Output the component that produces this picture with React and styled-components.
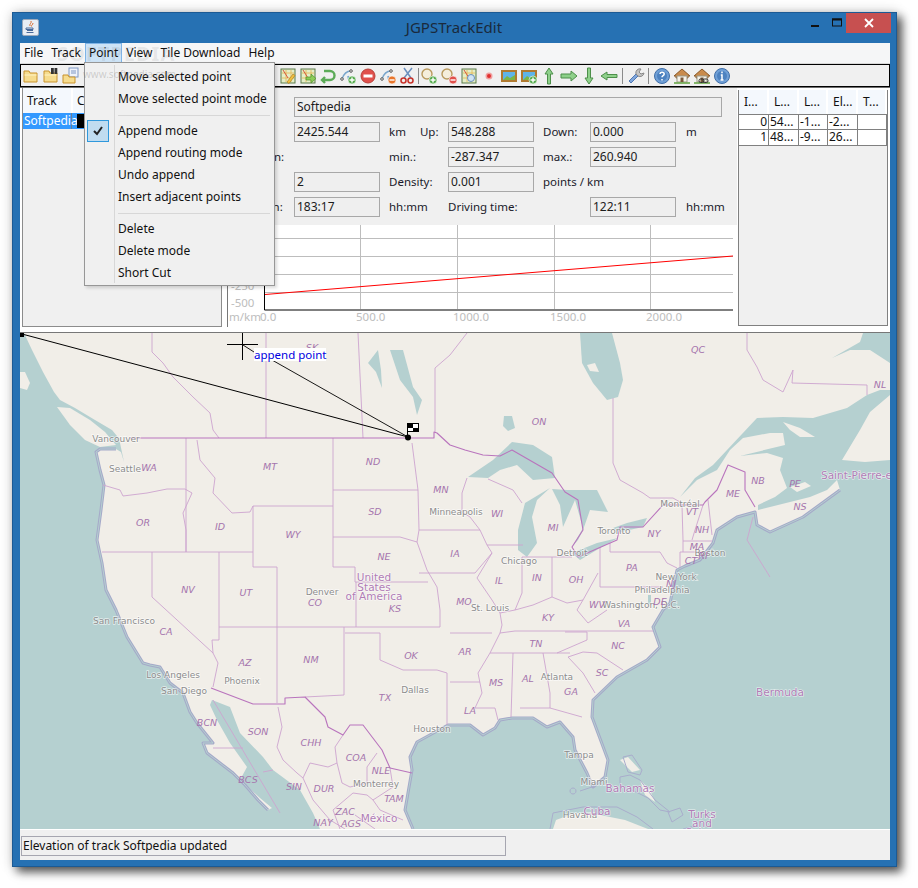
import React from "react";
import styled, { createGlobalStyle } from "styled-components";

const GlobalStyle = createGlobalStyle`
  html, body {
    margin: 0;
    padding: 0;
    background: #fff;
    font-family: "Noto Sans", "Liberation Sans", sans-serif;
    font-size: 12px;
    color: #111;
  }
`;

const Page = styled.div`
  width: 918px;
  height: 888px;
  padding: 12px 0 0 12px;
  box-sizing: border-box;
  overflow: hidden;
`;

const Window = styled.div`
  width: 885px;
  height: 855px;
  background: #2671b3;
  box-shadow: 5px 5px 9px rgba(0, 0, 0, 0.65), 0 0 12px rgba(0, 0, 0, 0.18);
  outline: 1px solid #1c5a94;
  outline-offset: -1px;
  display: flex;
  flex-direction: column;
`;

const TitleBar = styled.div`
  height: 31px;
  position: relative;
  display: flex;
  align-items: flex-start;
  justify-content: center;
  flex: none;
`;

const TitleIcon = styled.div`
  position: absolute;
  left: 10px;
  top: 7px;
  width: 15px;
  height: 15px;
  background: #e8edf4;
  border: 1px solid #9aa8bb;
  border-radius: 2px;
  display: flex;
  align-items: center;
  justify-content: center;
`;

const TitleText = styled.div`
  margin-top: 5px;
  margin-left: -1px;
  font-size: 15px;
  line-height: 20px;
  color: #1a2a3c;
`;

const WindowButtons = styled.div`
  position: absolute;
  right: 6px;
  top: 1px;
  display: flex;
  align-items: flex-start;
`;

const WinButton = styled.div`
  width: ${(p) => p.$w}px;
  height: 20px;
  background: ${(p) => (p.$close ? "#c75050" : "transparent")};
  display: flex;
  align-items: center;
  justify-content: center;
`;

const Client = styled.div`
  position: relative;
  margin: 0 7px 7px 8px;
  height: 817px;
  background: #f0f0f0;
  display: flex;
  flex-direction: column;
  overflow: hidden;
`;

const MenuBar = styled.div`
  height: 20px;
  flex: none;
  background: #f5f6f7;
  display: flex;
  align-items: stretch;
  padding-left: 0;
  border-bottom: 1px solid #d8d8d8;
`;

const MenuLabel = styled.div`
  padding: 0 ${(p) => p.$pad || 4}px;
  line-height: 19px;
  margin-right: ${(p) => p.$gap || 0}px;
  box-sizing: border-box;
  background: ${(p) => (p.$open ? "#cde3f6" : "transparent")};
  box-shadow: ${(p) => (p.$open ? "inset 0 0 0 1px #7fb4e6" : "none")};
  white-space: nowrap;
`;

const Toolbar = styled.div`
  height: 22px;
  flex: none;
  display: flex;
  align-items: center;
  border: 1px solid #000;
  background: #f0f0f0;
  border-bottom-width: 1px;
  box-shadow: 0 2px 0 #6e6e6e;
  box-sizing: border-box;
  height: 23px;
`;

const ToolSpacer = styled.div`
  width: ${(p) => p.$w}px;
  flex: none;
`;

const ToolCell = styled.div`
  width: 20px;
  height: 20px;
  flex: none;
  display: flex;
  align-items: center;
  justify-content: center;
`;

const ToolSep = styled.div`
  width: 1px;
  height: 16px;
  flex: none;
  background: #8a8a8a;
  margin: 0 ${(p) => p.$r || 0}px 0 ${(p) => p.$l || 0}px;
`;

const Panels = styled.div`
  height: 245px;
  flex: none;
  margin-top: 1px;
  display: flex;
  background: #fff;
  border-bottom: 1px solid #777;
  box-sizing: border-box;
`;

const TrackPanel = styled.div`
  width: 200px;
  margin-left: 2px;
  height: 239px;
  flex: none;
  box-sizing: border-box;
  background: #f0f0f0;
  border: 1px solid #8c8c8c;
  border-top: none;
`;

const TableHead = styled.div`
  display: grid;
  grid-template-columns: ${(p) => p.$cols};
  height: ${(p) => p.$h}px;
  background: #fff;
`;

const HeadCell = styled.div`
  background: #f4f8fd;
  margin-right: 2px;
  padding-left: ${(p) => p.$pad || 4}px;
  line-height: ${(p) => p.$h}px;
  white-space: nowrap;
  overflow: hidden;
`;

const TrackRow = styled.div`
  display: grid;
  grid-template-columns: 49px 1fr;
  height: 16px;
  background: #3399ff;
  color: #fff;
  line-height: 15px;
`;

const TrackName = styled.div`
  padding-left: 1px;
  border-right: 1px solid #6c7f95;
`;

const Swatch = styled.div`
  background: #000;
  width: 20px;
  height: 14px;
  margin: 1px 0 0 5px;
`;

const CenterPanel = styled.div`
  width: 510px;
  flex: none;
  margin-left: 5px;
  height: 239px;
  display: flex;
  flex-direction: column;
  border-left: 1px solid #777;
  box-sizing: border-box;
`;

const StatsForm = styled.div`
  height: 137px;
  flex: none;
  background: #f0f0f0;
  box-sizing: border-box;
  padding: 9px 0 0 4px;
  display: grid;
  grid-template-columns: 62px 86px 68px 86px 56px 86px 46px;
  grid-auto-rows: 20px;
  row-gap: 5px;
`;

const FormLabel = styled.div`
  grid-column: ${(p) => p.$col || "auto"};
  padding-left: ${(p) => p.$pad || 0}px;
  line-height: 20px;
  white-space: nowrap;
  font-size: 11.5px;
  color: #1a1a2a;
`;

const UnitWithLabel = styled(FormLabel)`
  display: flex;
  gap: 14px;
`;

const Field = styled.div`
  grid-column: ${(p) => p.$col || "auto"};
  box-sizing: border-box;
  border: 1px solid #a8a8a8;
  background: #efefef;
  padding-left: 2px;
  line-height: 18px;
  font-size: 12px;
  color: #1c1c1c;
`;

const ChartBox = styled.div`
  flex: 1;
  background: #fff;
  position: relative;
`;

const PointPanel = styled.div`
  width: 150px;
  flex: none;
  margin: 2px 0 0 1px;
  height: 236px;
  box-sizing: border-box;
  background: #f0f0f0;
  border: 1px solid #808080;
  border-top: none;
`;

const PointGrid = styled.div`
  display: grid;
  grid-template-columns: 30px 30px 29px 30px 29px;
`;

const PointCell = styled.div`
  height: 16px;
  box-sizing: border-box;
  background: #fff;
  border-right: 1px solid #808080;
  border-bottom: 1px solid #808080;
  border-top: ${(p) => (p.$first ? "1px solid #808080" : "none")};
  line-height: 14px;
  font-size: 12px;
  padding: 0 1px;
  text-align: ${(p) => (p.$right ? "right" : "left")};
  white-space: nowrap;
  overflow: hidden;
`;

const MapArea = styled.div`
  height: 496px;
  flex: none;
  position: relative;
  overflow: hidden;
  background: #b5d0d0;
`;

const MapSvg = styled.svg`
  display: block;
  width: 870px;
  height: 496px;
`;

const MapTip = styled.div`
  position: absolute;
  left: 234px;
  top: 15px;
  width: 72px;
  height: 13px;
  background: #fff;
  color: #0000e0;
  font-size: 11.5px;
  line-height: 13px;
  white-space: nowrap;
`;

const StatusBar = styled.div`
  flex: 1;
  padding: 6px 0 0 1px;
  background: #f0f0f0;
  border-top: 1px solid #fff;
  box-sizing: border-box;
`;

const StatusField = styled.div`
  width: 485px;
  height: 20px;
  box-sizing: border-box;
  border: 1px solid #a6a6b0;
  padding-left: 1px;
  line-height: 18px;
  color: #111;
`;

const PopupMenu = styled.div`
  position: absolute;
  left: 64px;
  top: 19px;
  width: 191px;
  height: 224px;
  box-sizing: border-box;
  background: #f0f0f0;
  border: 1px solid #979797;
  box-shadow: 2px 2px 3px rgba(0, 0, 0, 0.15);
  padding: 3px 2px;
  z-index: 5;

  &::before {
    content: "";
    position: absolute;
    left: 29px;
    top: 2px;
    bottom: 2px;
    width: 1px;
    background: #d7d7d7;
  }
`;

const MenuItem = styled.div`
  height: 22px;
  line-height: 22px;
  padding-left: 31px;
  position: relative;
  white-space: nowrap;
  color: #111;
`;

const MenuDivider = styled.div`
  height: 1px;
  margin: 5px 2px 4px 31px;
  background: #d7d7d7;
`;

const CheckBox = styled.div`
  position: absolute;
  left: 0;
  top: 0;
  width: 22px;
  height: 22px;
  box-sizing: border-box;
  background: #c0dcf0;
  border: 1px solid #2f98dc;
  display: flex;
  align-items: center;
  justify-content: center;
`;

const Watermark = styled.div`
  position: absolute;
  left: ${(p) => p.$x}px;
  top: ${(p) => p.$y}px;
  font-size: ${(p) => p.$size}px;
  font-weight: ${(p) => p.$weight || 400};
  letter-spacing: ${(p) => p.$spacing || 0}px;
  color: rgba(120, 120, 120, ${(p) => p.$alpha});
  pointer-events: none;
  white-space: nowrap;
  z-index: 6;
`;

/* toolbar icons, 18x18 */
const folder = (
  <>
    <path d="M2 4h5l1 2h7v9H2z" fill="#f6dc8e" stroke="#c8922c" />
    <path d="M2.500 8h12" stroke="#fff3c4" />
  </>
);

const mapTile = (
  <>
    <rect x="2" y="2" width="14" height="14" fill="#e4eec8" stroke="#5a7a4a" />
    <path d="M3 6h12M3 11h12M7 3v12M12 3v12" stroke="#e6b552" strokeWidth=".8" />
    <path d="M4 3l5 8" stroke="#d8553c" />
  </>
);

const curve = (
  <>
    <path d="M3 12C5 6 8 4 12 4" fill="none" stroke="#7aa6cc" strokeWidth="1.4" />
    <circle cx="3" cy="12" r="1.300" fill="#fff" stroke="#555" />
    <circle cx="12" cy="4" r="1.300" fill="#fff" stroke="#555" />
    <path d="M9 9l1 5" stroke="#6aa0d0" strokeWidth="1.5" />
  </>
);

const badge = (color, minus) => (
  <>
    <circle cx="13" cy="13" r="4" fill={color} stroke="#fff" strokeWidth=".6" />
    <path d={minus ? "M10.500 13h5" : "M10.500 13h5M13 10.500v5"} stroke="#fff" strokeWidth="1.4" />
  </>
);

const lens = (
  <>
    <circle cx="7" cy="7" r="5" fill="#f5eedc" stroke="#b99a5e" strokeWidth="1.4" />
    <path d="M11 11l4 4" stroke="#b08a4a" strokeWidth="2.200" />
  </>
);

const picture = (
  <>
    <rect x="1" y="3" width="16" height="12" fill="#b07a30" />
    <rect x="3" y="5" width="12" height="8" fill="#5fb4e8" />
    <path d="M3 13l4-4 3 2 5-3v5z" fill="#7ab648" />
  </>
);

const arrow = (d) => <path d={d} fill="#8ed08a" stroke="#4d8f4a" />;

const house = (
  <>
    <path d="M9 2L1 9h2v2h12V9h2z" fill="#c98b4c" stroke="#8a5a28" />
    <rect x="4" y="9" width="10" height="6" fill="#f6f3ea" stroke="#9a9a8a" />
    <rect x="7.500" y="10.500" width="3" height="4.500" fill="#7a5a3a" />
    <path d="M1 16h16" stroke="#6aa84a" strokeWidth="1.600" />
  </>
);

const disc = (letter) => (
  <>
    <circle cx="9" cy="9" r="7.500" fill="#6f9fd6" stroke="#3f6ea8" />
    <circle cx="9" cy="9" r="5" fill="#4d82c0" />
    {letter === "?" ? (
      <path d="M7 7c0-2.500 4.200-2.500 4.200 0 0 1.800-2.200 1.500-2.200 3.300M9 12v1.500" fill="none" stroke="#fff" strokeWidth="1.500" />
    ) : (
      <path d="M9 4.500v1.800M7.800 8H9v5M7.500 13h3" fill="none" stroke="#fff" strokeWidth="1.500" />
    )}
  </>
);

const toolIcons = {
  folder,
  search: (
    <>
      {folder}
      <rect x="9" y="1" width="2.800" height="6" fill="#333" />
      <rect x="12.500" y="1" width="2.800" height="6" fill="#333" />
    </>
  ),
  docs: (
    <>
      <rect x="7" y="1" width="9" height="9" fill="#eef2fa" stroke="#7f97c4" />
      <path d="M9 4h5M9 6h5" stroke="#7f97c4" />
      <path d="M1 8h5l1 2h6v6H1z" fill="#f6dc8e" stroke="#c8922c" />
    </>
  ),
  mapEdit: (
    <>
      {mapTile}
      <path d="M8 15l6-8 2 1.500-6 8z" fill="#f0c040" stroke="#b08020" strokeWidth=".7" />
    </>
  ),
  mapGo: (
    <>
      {mapTile}
      <path d="M7 10h5V7l5 4.500-5 4.500v-3H7z" fill="#8ccc58" stroke="#4d8f2a" strokeWidth=".7" />
    </>
  ),
  undo: <path d="M5 4h6a4 4 0 0 1 0 9H3M6 10l-3 3 3 3M5 4" fill="none" stroke="#5cab58" strokeWidth="2.400" />,
  curveAdd: (
    <>
      {curve}
      {badge("#58ac50")}
    </>
  ),
  minus: (
    <>
      <circle cx="9" cy="9" r="7" fill="#e0504c" stroke="#b8403a" />
      <rect x="4.500" y="7.500" width="9" height="3" fill="#fff" />
    </>
  ),
  curveDel: (
    <>
      {curve}
      {badge("#e8762c", true)}
    </>
  ),
  scissors: (
    <>
      <path d="M5 11L13 1M12 11L5 1" stroke="#6a8fbe" strokeWidth="1.500" />
      <circle cx="4.500" cy="13.500" r="2.500" fill="none" stroke="#c8342c" strokeWidth="1.600" />
      <circle cx="11.500" cy="13.500" r="2.500" fill="none" stroke="#c8342c" strokeWidth="1.600" />
    </>
  ),
  zoomIn: (
    <>
      {lens}
      {badge("#58ac50")}
    </>
  ),
  zoomOut: (
    <>
      {lens}
      {badge("#e0504c", true)}
    </>
  ),
  mapZoom: (
    <>
      {mapTile}
      <circle cx="11" cy="11" r="3.500" fill="#cfe3f4" stroke="#6a8fbe" />
    </>
  ),
  dot: (
    <>
      <circle cx="9" cy="9" r="3.500" fill="#f0a0a0" />
      <circle cx="9" cy="9" r="2" fill="#e03030" />
    </>
  ),
  picture,
  pictureAdd: (
    <>
      {picture}
      {badge("#58ac50")}
    </>
  ),
  up: arrow("M9 1l4 6h-2.500v10h-3V7H5z"),
  right: arrow("M1 7h10V4l6 5-6 5v-3H1z"),
  down: arrow("M7.500 1h3v10H13l-4 6-4-6h2.500z"),
  left: arrow("M17 7.500H7V5L1 9l6 4v-2.500h10z"),
  wrench: (
    <>
      <path d="M2 14l7-7 2 2-7 7z" fill="#7fa6dc" stroke="#4f78b4" />
      <path d="M9 7a4 4 0 0 1 5-5l-2 3 2 2 3-1a4 4 0 0 1-6 3z" fill="#c4c4c4" stroke="#888" />
    </>
  ),
  help: disc("?"),
  house,
  houseLink: (
    <>
      {house}
      <rect x="6" y="12" width="5" height="3.500" rx="1.500" fill="none" stroke="#333" />
      <rect x="10" y="12" width="5" height="3.500" rx="1.500" fill="none" stroke="#333" />
    </>
  ),
  info: disc("i"),
};

const Tool = ({ kind }) => (
  <ToolCell>
    <svg width="18" height="18" viewBox="0 0 18 18">
      {toolIcons[kind]}
    </svg>
  </ToolCell>
);

const renderTools = (list) => list.map((k) => <Tool key={k} kind={k} />);

/* map geometry in page coordinates, viewBox starts at the map's corner */
const pacific =
  "M20 333L24 333 32 350 43 372 54 392 60 400 75 408 95 420 112 430 117 436 120 443 124 462 121 452 116 449 100 449 96 452 100 470 104 485 101 510 97 540 102 563 106 590 116 610 127 637 143 663 150 665 160 667 170 683 183 693 190 712 197 723 213 743 203 743 207 753 233 773 245 785 258 800 268 810 272 808 260 798 240 780 247 767 230 743 217 720 210 705 212 700 230 707 240 733 263 757 273 770 300 790 313 813 320 829 20 829Z";
const atlantic =
  "M413 829L405 810 412 770 410 757 417 742 448 725 470 725 483 735 495 728 500 720 512 718 533 718 547 727 560 722 573 737 575 750 587 773 593 787 605 777 608 760 592 717 593 700 617 677 647 660 660 647 653 627 663 610 670 603 677 570 685 566 700 560 713 543 717 530 737 517 755 512 757 525 770 532 803 517 840 490 837 480 827 490 810 497 790 502 770 507 758 510 758 505 775 497 787 488 780 470 783 458 767 453 740 456 785 445 783 433 770 433 743 438 730 450 717 470 697 480 680 497 695 478 713 465 727 450 757 418 783 417 813 418 847 408 867 395 880 390 890 390 890 829Z";
const westCoast =
  "M116 449L100 449 96 452 100 470 104 485 101 510 97 540 102 563 106 590 116 610 127 637 143 663 150 665 160 667 170 683 183 693 190 712 197 723 213 743 203 743 207 753 233 773 245 785 258 800 268 810";
const eastCoast =
  "M413 829L405 810 412 770 410 757 417 742 448 725 470 725 483 735 495 728 500 720 512 718 533 718 547 727 560 722 573 737 575 750 587 773 593 787 605 777 608 760 592 717 593 700 617 677 647 660 660 647 653 627 663 610 670 603 677 570 685 566 700 560 713 543 717 530 737 517 755 512 757 525 770 532 803 517 840 490";

const lakes = [
  "M468 477L493 460 512 442 533 445 552 457 555 478 533 480 517 465 500 470 488 478Z",
  "M518 530L525 503 550 488 537 500 532 517 537 543 527 557 518 550Z",
  "M552 489L567 490 597 490 608 512 590 510 583 530 578 540 572 547 583 528 575 500 563 527 560 505Z",
  "M572 553L597 543 618 538 600 548 580 560Z",
  "M613 528L627 523 647 518 643 527 620 532Z",
  "M390 350L403 350 413 387 422 400 417 415 413 397 400 380Z",
  "M368 363L378 350 381 370 382 388 376 372Z",
  "M580 333L612 333 620 363 623 380 618 397 607 400 593 383 582 363Z",
  "M832 358L860 342 863 333 890 333 890 363 870 350 850 350Z",
  "M504 416L512 416 515 428 508 431 503 426Z",
  "M648 595L651 595 651 604 648 604Z",
];

const lands = [
  "M20 372L25 372 30 383 27 390 20 388Z",
  "M57 407L70 408 90 420 105 432 116 445 100 447 85 440 70 425Z",
  "M890 395L870 412 860 430 842 460 865 462 890 460Z",
  "M783 422L800 428 815 437 800 437 790 430Z",
  "M587 365L595 363 599 372 590 371Z",
  "M790 487L805 482 811 486 797 492Z",
  "M553 829L556 820 575 813 600 815 625 820 648 829Z",
  "M620 760L628 757 640 770 632 772Z",
  "M640 780L650 790 655 802 645 795Z",
];

const stateLines = [
  "M186 438V552M197 440L200 460 215 478 213 493 232 513 250 512 253 506M253 506H333M333 438V567M333 490H418M333 537H400L417 542",
  "M412 443L418 490 419 530 417 542 427 570 437 587 440 610V627M333 567H355V582H428M253 506V567H277M103 485L120 490 123 496 147 493 167 489 185 489 192 493 183 513 186 530V552",
  "M102 552H253M152 552V597L213 653 218 663 213 687M219 552V640L212 640 213 653M277 567V703M219 627H440M344 627V695L305 697M345 633H380V660L403 670 437 670 447 673V725M356 582V627",
  "M419 530H480M462 493L467 478M462 493V512L470 517 480 530 487 545 492 553 477 578 492 600 500 613 502 625 500 633 490 653 478 673 482 693 475 708",
  "M419 573H475L492 553M487 545H523M488 479L513 490 522 503M522 557V593L515 610 533 605 552 597 567 603 583 600 598 573M522 557H572M552 557V597",
  "M600 547V587H663M610 543V552H660L667 563 677 568M682 505L683 540V552M703 505L695 530 692 540M708 500L712 535M683 541H712M680 552H708M680 552V567",
  "M450 633H492M500 633L515 631H653M515 610L500 613M490 653H570M565 632H587V640L557 653M568 657L583 652 597 653 623 670M568 657L583 673 595 693M543 653L550 693V708L582 717M513 653L511 717M520 708H550",
  "M450 682H480M475 708H495L498 720M577 610L588 623 607 610M583 600L577 610",
  "M152 333V352L163 363 173 377 193 397 210 413 213 430 219 438M266 333V438M358 333L363 438M435 368V432M435 368L450 355 467 333",
  "M613 398V463L620 480 643 493 650 498 673 498 680 502M747 333V350L757 367 763 380 783 392 793 370 792 383 867 385V395",
  "M278 707L282 727 277 747 283 760 297 773 303 778M303 778L310 763 328 767 337 763 335 747 343 735M337 763L342 783 350 787 367 783 367 767 377 753M333 810L353 793 367 795 373 800 393 787 390 768M303 778L313 800 330 820 345 829M373 800L380 810 403 820M355 815L375 829M333 810L340 829",
  "M213 748H243M213 700L280 813M263 772L273 770M753 517L747 540 770 577",
];

const intlLines = [
  "M130 438H434V432L437 433 450 445 465 450 483 455 500 456 512 450 552 473 565 492 578 500 583 530 572 547 578 557 617 540 620 527 643 527 663 505H703L705 502 717 490 728 465 745 472 745 490 755 507",
  "M211 688L253 704H285V698L305 697 325 717 328 727 343 735 350 725 363 725 382 750 390 768 412 773",
];

const loops = [
  "M623 757L632 755 642 770 640 775 628 772Z",
  "M620 777L630 775 640 780 655 800 670 812 660 810 648 798 632 790 620 785Z",
  "M668 812L680 808 683 815 672 822Z",
  "M573 788a3 3 0 1 0 .01 0M580 791L595 786",
  "M550 829L553 813 583 807 617 807 637 817 653 829",
  "M683 829L695 826",
];

const states = [
  ["SK", 312, 347], ["WA", 149, 467], ["MT", 270, 466], ["ND", 373, 461], ["MN", 441, 489], ["SD", 375, 511],
  ["WY", 293, 534], ["OR", 143, 522], ["ID", 220, 526], ["NE", 384, 556], ["NV", 188, 589], ["UT", 246, 592],
  ["CO", 315, 602], ["KS", 395, 608], ["QC", 698, 349], ["ON", 539, 421], ["NL", 880, 384], ["NB", 758, 480],
  ["PE", 795, 483], ["NS", 800, 506], ["ME", 733, 493], ["VT", 692, 511], ["NH", 702, 529], ["MA", 697, 546],
  ["RI", 703, 555], ["CT", 691, 560], ["NY", 654, 533], ["WI", 497, 513], ["MI", 553, 527], ["IA", 455, 553],
  ["IL", 499, 580], ["IN", 537, 577], ["OH", 576, 579], ["PA", 632, 567], ["NJ", 671, 583], ["DE", 660, 601],
  ["WV", 597, 604], ["MO", 464, 601], ["CA", 166, 631], ["AZ", 245, 662], ["NM", 311, 659], ["OK", 411, 655],
  ["TX", 385, 697], ["BCN", 207, 722], ["SON", 258, 731], ["CHH", 311, 742], ["COA", 356, 757], ["NLE", 381, 770],
  ["BCS", 248, 779], ["SIN", 294, 786], ["DUR", 324, 788], ["TAM", 394, 798], ["ZAC", 345, 811], ["NAY", 323, 822],
  ["AGS", 351, 823], ["KY", 548, 617], ["VA", 624, 623], ["TN", 536, 643], ["NC", 618, 645], ["AR", 465, 651],
  ["SC", 602, 672], ["AL", 528, 678], ["MS", 496, 682], ["GA", 571, 691], ["LA", 470, 710],
];

const cities = [
  ["Vancouver", 116, 439], ["Seattle", 125, 469], ["Minneapolis", 456, 512], ["Denver", 322, 592], ["Boston", 710, 553],
  ["Montréal", 680, 504], ["Toronto", 614, 531], ["Detroit", 572, 553], ["Chicago", 519, 561], ["New York", 676, 577],
  ["Philadelphia", 662, 590], ["Washington, D.C.", 641, 605], ["St. Louis", 490, 608], ["San Francisco", 124, 621],
  ["Phoenix", 242, 681], ["Dallas", 415, 690], ["Los Angeles", 173, 675], ["San Diego", 184, 691], ["Houston", 432, 729],
  ["Monterrey", 376, 784], ["Atlanta", 557, 677], ["Tampa", 579, 755], ["Miami", 594, 782], ["Havana", 580, 815],
];

const countries = [
  ["United", 374, 577], ["States", 374, 587], ["of America", 374, 596], ["México", 379, 818], ["Bermuda", 780, 692],
  ["Bahamas", 630, 788], ["Cuba", 597, 811], ["Turks", 702, 814], ["and", 702, 823], ["Caicos", 702, 832],
];

const MapDrawing = () => (
  <MapSvg viewBox="20 333 870 496">
    <rect x="20" y="333" width="870" height="496" fill="#f1eee8" />
    <g fill="#b5d0d0">
      <path d={pacific} />
      <path d={atlantic} />
      {lakes.map((d) => (
        <path key={d} d={d} />
      ))}
    </g>
    <g fill="#f1eee8">
      {lands.map((d) => (
        <path key={d} d={d} />
      ))}
    </g>
    <g fill="none" strokeLinejoin="round">
      <g stroke="#a5a9c9" strokeWidth="3">
        <path d={westCoast} />
        <path d={eastCoast} />
      </g>
      <g stroke="#b5d0d0" strokeWidth="1">
        <path d={westCoast} />
        <path d={eastCoast} />
      </g>
      <g stroke="#a9adcc" strokeWidth="1">
        {loops.map((d) => (
          <path key={d} d={d} />
        ))}
      </g>
      <g stroke="#cda4cf" strokeWidth="0.9">
        {stateLines.map((d) => (
          <path key={d} d={d} />
        ))}
      </g>
      <g stroke="#b974bd" strokeWidth="1.100">
        {intlLines.map((d) => (
          <path key={d} d={d} />
        ))}
      </g>
    </g>
    <g fontFamily="DejaVu Sans, sans-serif" textAnchor="middle" dominantBaseline="central">
      <g fontSize="9" fill="#8c8c8c" stroke="#fff" strokeWidth="1.500" paintOrder="stroke" strokeOpacity="0.65">
        {cities.map(([t, x, y]) => (
          <text key={t} x={x} y={y}>{t}</text>
        ))}
      </g>
      <g fontSize="9.500" fontStyle="italic" fill="#a574ad">
        {states.map(([t, x, y]) => (
          <text key={t} x={x} y={y}>{t}</text>
        ))}
      </g>
      <g fontSize="10.500" fill="#b07cb5" stroke="#fff" strokeWidth="1.200" paintOrder="stroke" strokeOpacity="0.7">
        {countries.map(([t, x, y]) => (
          <text key={t} x={x} y={y}>{t}</text>
        ))}
        <text x="821" y="475" textAnchor="start">Saint-Pierre-et-Miquelon</text>
      </g>
    </g>
    <g stroke="#000" fill="none">
      <path d="M22 334L408 437" strokeWidth="1" />
      <path d="M272 360L408 437M243 345L254 352" strokeWidth="0.9" />
      <path d="M227 344.500H258M242.500 333V360" strokeWidth="1" />
    </g>
    <rect x="20" y="333" width="4" height="4" fill="#000" />
    <circle cx="408" cy="437.500" r="3" fill="#000" />
    <path d="M407.500 437V424" stroke="#000" />
    <rect x="407.500" y="423.500" width="11" height="8" fill="#fff" stroke="#000" />
    <path d="M408 424h5v4h-5zM413 428h5v3h-5z" fill="#000" />
  </MapSvg>
);

const ElevationChart = () => (
  <svg width="508" height="102" viewBox="227 226 508 102" style={{ display: "block" }}>
    <g stroke="#bdbdbd" strokeWidth="1">
      <path d="M263 239.500H732M263 257.500H732M263 275.500H732M263 293.500H732" />
      <path d="M359.500 226V310M456.500 226V310M553.500 226V310M649.500 226V310" />
    </g>
    <path d="M263.500 226V311H732" fill="none" stroke="#000" strokeWidth="1" />
    <path d="M264 295.500L732 257" stroke="#f00" strokeWidth="1" fill="none" />
    <g fontFamily="Noto Sans, sans-serif" fontSize="11.500" fill="#bdbdbd">
      <text x="230" y="291">-250</text>
      <text x="230" y="308">-500</text>
      <text x="228" y="322">m/km</text>
      <text x="259" y="322">0.0</text>
      <text x="355" y="322">500.0</text>
      <text x="452" y="322">1000.0</text>
      <text x="549" y="322">1500.0</text>
      <text x="645" y="322">2000.0</text>
    </g>
  </svg>
);

const pointRows = [
  ["0", "54...", "-1...", "-2...", ""],
  ["1", "48...", "-9...", "26...", ""],
];

export default function App() {
  return (
    <Page>
      <GlobalStyle />
      <Window>
        <TitleBar>
          <TitleIcon>
            <svg width="11" height="13" viewBox="0 0 11 13">
              <path d="M6 0c1 2-2 3-1 5M8 2c0 2-2 2-1.500 3.500" fill="none" stroke="#d8692a" strokeWidth="1" />
              <path d="M1 7h7v1.500H1zM2 9.500h6M1.500 11.500h7" stroke="#4a6a9a" strokeWidth="1" fill="none" />
            </svg>
          </TitleIcon>
          <TitleText>JGPSTrackEdit</TitleText>
          <WindowButtons>
            <WinButton $w={27}>
              <svg width="10" height="10" viewBox="0 0 10 10">
                <rect x="1" y="7" width="8" height="2" fill="#111" />
              </svg>
            </WinButton>
            <WinButton $w={18}>
              <svg width="12" height="10" viewBox="0 0 12 10">
                <rect x="1.500" y="1" width="9" height="7" fill="none" stroke="#111" />
                <rect x="1" y="0.500" width="10" height="2" fill="#111" />
              </svg>
            </WinButton>
            <WinButton $w={45} $close>
              <svg width="10" height="10" viewBox="0 0 10 10">
                <path d="M1 1l8 8M9 1l-8 8" stroke="#fff" strokeWidth="1.800" />
              </svg>
            </WinButton>
          </WindowButtons>
        </TitleBar>
        <Client>
          <MenuBar>
            <MenuLabel>File</MenuLabel>
            <MenuLabel>Track</MenuLabel>
            <MenuLabel $open>Point</MenuLabel>
            <MenuLabel>View</MenuLabel>
            <MenuLabel>Tile Download</MenuLabel>
            <MenuLabel>Help</MenuLabel>
          </MenuBar>
          <Toolbar>
            {renderTools(["folder", "search", "docs"])}
            <ToolSpacer $w={197} />
            {renderTools(["mapEdit", "mapGo", "undo", "curveAdd", "minus", "curveDel", "scissors"])}
            <ToolSep />
            {renderTools(["zoomIn", "zoomOut", "mapZoom", "dot", "picture", "pictureAdd", "up", "right", "down", "left"])}
            <ToolSep $l={3} $r={3} />
            {renderTools(["wrench"])}
            <ToolSep $l={2} $r={3} />
            {renderTools(["help", "house", "houseLink", "info"])}
          </Toolbar>
          <Panels>
            <TrackPanel>
              <TableHead $cols="50px 1fr" $h={25}>
                <HeadCell $h={25}>Track</HeadCell>
                <HeadCell $h={25}>Color</HeadCell>
              </TableHead>
              <TrackRow>
                <TrackName>Softpedia</TrackName>
                <Swatch />
              </TrackRow>
            </TrackPanel>
            <CenterPanel>
              <StatsForm>
                <FormLabel>Name:</FormLabel>
                <Field $col="2 / 8">Softpedia</Field>
                <FormLabel>Length:</FormLabel>
                <Field>2425.544</Field>
                <UnitWithLabel $pad={9}>
                  <span>km</span>
                  <span>Up:</span>
                </UnitWithLabel>
                <Field>548.288</Field>
                <FormLabel $pad={9}>Down:</FormLabel>
                <Field>0.000</Field>
                <FormLabel $pad={10}>m</FormLabel>
                <FormLabel $col="1 / 3">Elevation:</FormLabel>
                <FormLabel $pad={9}>min.:</FormLabel>
                <Field>-287.347</Field>
                <FormLabel $pad={9}>max.:</FormLabel>
                <Field>260.940</Field>
                <FormLabel />
                <FormLabel>Points:</FormLabel>
                <Field>2</Field>
                <FormLabel $pad={9}>Density:</FormLabel>
                <Field>0.001</Field>
                <FormLabel $pad={9} $col="5 / 8">points / km</FormLabel>
                <FormLabel>Duration:</FormLabel>
                <Field>183:17</Field>
                <FormLabel $pad={9}>hh:mm</FormLabel>
                <FormLabel $col="4 / 6">Driving time:</FormLabel>
                <Field>122:11</Field>
                <FormLabel $pad={10}>hh:mm</FormLabel>
              </StatsForm>
              <ChartBox>
                <ElevationChart />
              </ChartBox>
            </CenterPanel>
            <PointPanel>
              <TableHead $cols="30px 30px 29px 30px 29px" $h={24}>
                {["I...", "L...", "L...", "El...", "T..."].map((t, i) => (
                  <HeadCell key={i} $h={24} $pad={5}>{t}</HeadCell>
                ))}
              </TableHead>
              <PointGrid>
                {pointRows.map((row, r) =>
                  row.map((t, c) => (
                    <PointCell key={`${r}-${c}`} $first={r === 0} $right={c === 0}>{t}</PointCell>
                  ))
                )}
              </PointGrid>
            </PointPanel>
          </Panels>
          <MapArea>
            <MapDrawing />
            <MapTip>append point</MapTip>
          </MapArea>
          <StatusBar>
            <StatusField>Elevation of track Softpedia updated</StatusField>
          </StatusBar>
          <PopupMenu>
            <MenuItem>Move selected point</MenuItem>
            <MenuItem>Move selected point mode</MenuItem>
            <MenuDivider />
            <MenuItem>
              <CheckBox>
                <svg width="12" height="12" viewBox="0 0 12 12">
                  <path d="M2 6l3 3 5-7" fill="none" stroke="#222" strokeWidth="2" />
                </svg>
              </CheckBox>
              Append mode
            </MenuItem>
            <MenuItem>Append routing mode</MenuItem>
            <MenuItem>Undo append</MenuItem>
            <MenuItem>Insert adjacent points</MenuItem>
            <MenuDivider />
            <MenuItem>Delete</MenuItem>
            <MenuItem>Delete mode</MenuItem>
            <MenuItem>Short Cut</MenuItem>
          </PopupMenu>
          <Watermark $x={37} $y={-3} $size={20} $weight={700} $spacing={1} $alpha={0.14}>SOFTPEDIA</Watermark>
          <Watermark $x={63} $y={24} $size={10} $alpha={0.3}>www.softpedia.com</Watermark>
        </Client>
      </Window>
    </Page>
  );
}
